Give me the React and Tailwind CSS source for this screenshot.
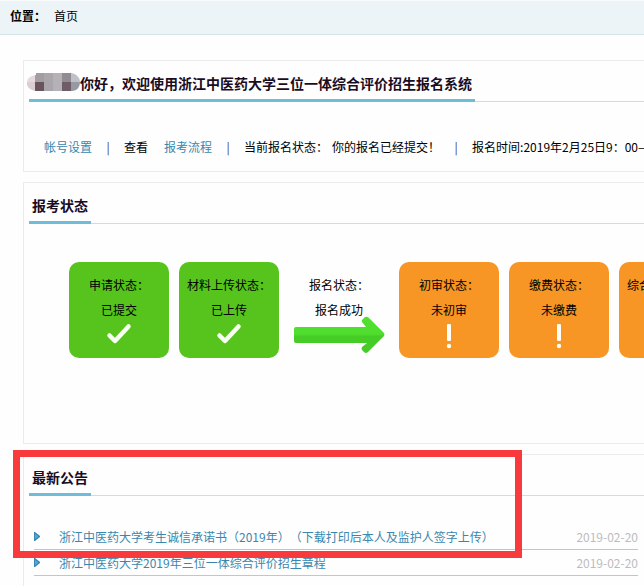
const steps = [
  { title: '申请状态：', value: '已提交', state: 'done' },
  { title: '材料上传状态：', value: '已上传', state: 'done' },
  { title: '报名状态：', value: '报名成功', state: 'arrow' },
  { title: '初审状态：', value: '未初审', state: 'pending' },
  { title: '缴费状态：', value: '未缴费', state: 'pending' },
  { title: '综合测试状态：', value: '未测试', state: 'pending' },
];

const notices = [
  { title: '浙江中医药大学考生诚信承诺书（2019年）（下载打印后本人及监护人签字上传）', date: '2019-02-20' },
  { title: '浙江中医药大学2019年三位一体综合评价招生章程', date: '2019-02-20' },
];

const stepStyles = {
  done: 'bg-[#56c41c]',
  arrow: '',
  pending: 'bg-[#f79624]',
};

function PanelTitle({ children }) {
  return (
    <div className="ml-[5px] flex h-[41px] items-end border-b border-[#d3dbe0]">
      <h2 className="relative -mb-px border-b-3 border-[#6fbcda] px-[3px] text-[14px] leading-8 font-bold text-[#1a0d1f]">
        {children}
      </h2>
    </div>
  );
}

function Panel({ title, className = '', children }) {
  return (
    <section className={`relative border-t border-l border-[#e9ebec] ${className}`}>
      <PanelTitle>{title}</PanelTitle>
      {children}
    </section>
  );
}

/* Pixelated block that hides the applicant's name */
function HiddenName() {
  return (
    <svg className="absolute top-[6px] -left-[2px]" width="53" height="19" viewBox="0 0 53 19" aria-hidden="true">
      <defs>
        <clipPath id="pill">
          <path d="M9 0H44C50 1 53 5 53 9C53 14 50 18 45 18H9C3 17 0 14 0 10C0 5 3 3 9 2Z" />
        </clipPath>
      </defs>
      <g clipPath="url(#pill)">
        <rect width="9" height="19" fill="#e6d9de" />
        <rect y="9" width="9" height="10" fill="#dccdd1" />
        <rect x="8" width="9" height="9" fill="#a39ca1" />
        <rect x="17" width="9" height="9" fill="#aaa6aa" />
        <rect x="26" width="9" height="9" fill="#b5b1b6" />
        <rect x="35" width="9" height="9" fill="#938b92" />
        <rect x="44" width="9" height="9" fill="#bfc1c8" />
        <rect x="8" y="9" width="9" height="10" fill="#67545d" />
        <rect x="17" y="9" width="9" height="10" fill="#aaa5aa" />
        <rect x="26" y="9" width="9" height="10" fill="#b4b2b8" />
        <rect x="35" y="9" width="9" height="10" fill="#6e5c66" />
        <rect x="44" y="9" width="9" height="10" fill="#9799a5" />
      </g>
    </svg>
  );
}

function StepMark({ state }) {
  if (state === 'done') {
    return (
      <svg width="26" height="23" viewBox="0 -1 26 23" fill="none" aria-hidden="true">
        <path d="M3.5 12.5L9 18L22.500 3.500" stroke="#f7fff0" strokeWidth="4.500" strokeLinecap="round" strokeLinejoin="round" />
      </svg>
    );
  }
  return (
    <svg width="6" height="27" viewBox="0 -1 6 27" fill="#fffdf5" aria-hidden="true">
      <rect x="1" y="1" width="4" height="17" rx="1" />
      <circle cx="3" cy="23" r="2.2" />
    </svg>
  );
}

function ArrowMark() {
  return (
    <svg className="absolute top-[54px] left-[5px]" width="91" height="38" viewBox="0 0 91 38" aria-hidden="true">
      <defs>
        <linearGradient id="arrow-fill" x1="0" y1="0" x2="0" y2="1">
          <stop offset="0" stopColor="#50e02e" />
          <stop offset="0.48" stopColor="#50de2e" />
          <stop offset="0.54" stopColor="#45cc26" />
          <stop offset="1" stopColor="#45cc26" />
        </linearGradient>
      </defs>
      <path
        fill="url(#arrow-fill)"
        d="M2 11H72L68 6Q67 4 69 3L71 1Q73 0 75 2L90 17Q91 19 90 20L74 36Q72 38 70 36L68 34Q67 33 68 31L73 27H2Q0 27 0 25V13Q0 11 2 11Z"
      />
    </svg>
  );
}

function Step({ title, value, state }) {
  return (
    <li className={`relative flex h-24 w-[100px] shrink-0 flex-col items-center rounded-[10px] pt-[10px] leading-[25px] ${stepStyles[state]}`}>
      {state === 'arrow' && <ArrowMark />}
      <span className="relative">{title}</span>
      <span className="relative">{value}</span>
      {state !== 'arrow' && <StepMark state={state} />}
    </li>
  );
}

function Separator() {
  return <span className="w-8 shrink-0 text-center text-[#444]">|</span>;
}

export default function App() {
  return (
    <div className="flex min-h-screen flex-col overflow-hidden bg-[#fefefe] font-['Noto_Sans_CJK_SC',sans-serif] text-[12px] whitespace-nowrap text-black [text-spacing-trim:space-all]">
      <nav className="flex h-[35px] items-center gap-2 border-t border-b border-t-[#f8fbfc] border-b-[#d5e3e6] bg-[#edf4f8] pb-[3px] pl-[10px]">
        <span className="font-bold">位置：</span>
        <span>首页</span>
      </nav>

      <main className="flex flex-1 flex-col gap-[10px] pt-[25px] pl-[23px]">
        <Panel
          className="border-b"
          title={
            <>
              <HiddenName />
              <span className="pl-12">你好，欢迎使用浙江中医药大学三位一体综合评价招生报名系统</span>
            </>
          }
        >
          <div className="flex h-[69px] items-center pt-11 pb-6 pl-5">
            <a href="#account" className="shrink-0 text-[#3a87ad]">帐号设置</a>
            <Separator />
            <span className="mr-4 shrink-0">查看</span>
            <a href="#flow" className="shrink-0 text-[#3a87ad]">报考流程</a>
            <Separator />
            <span className="mr-1 shrink-0">当前报名状态：</span>
            <span className="shrink-0">你的报名已经提交！</span>
            <Separator />
            <span className="shrink-0">报名时间:2019年2月25日9：00—</span>
          </div>
        </Panel>

        <Panel className="border-b" title="报考状态">
          <ul className="flex gap-[10px] pt-[38px] pb-[85px] pl-[45px]">
            {steps.map((step) => (
              <Step key={step.title} {...step} />
            ))}
          </ul>
        </Panel>

        <Panel className="flex-1" title="最新公告">
          <ul className="pt-7 pr-[6px] pl-[10px]">
            {notices.map((notice) => (
              <li key={notice.title} className="flex h-[26px] items-center border-b border-[#c3c5c7]">
                <svg width="6" height="9" viewBox="0 0 6 9" aria-hidden="true">
                  <path d="M0 0H1L6 4V5L1 9H0Z" fill="#3a86b4" />
                  <path d="M1 2L4 4V5L1 7Z" fill="#3fb0e4" />
                </svg>
                <a href="#notice" className="ml-[19px] flex-1 text-[#3a87ad]">{notice.title}</a>
                <time dateTime={notice.date} className="text-[#bcbcbc]">{notice.date}</time>
              </li>
            ))}
          </ul>
          <div className="pointer-events-none absolute -top-[5px] -left-[11px] h-[108px] w-[509px] border-7 border-[#f93a3d]" />
        </Panel>
      </main>
    </div>
  );
}
